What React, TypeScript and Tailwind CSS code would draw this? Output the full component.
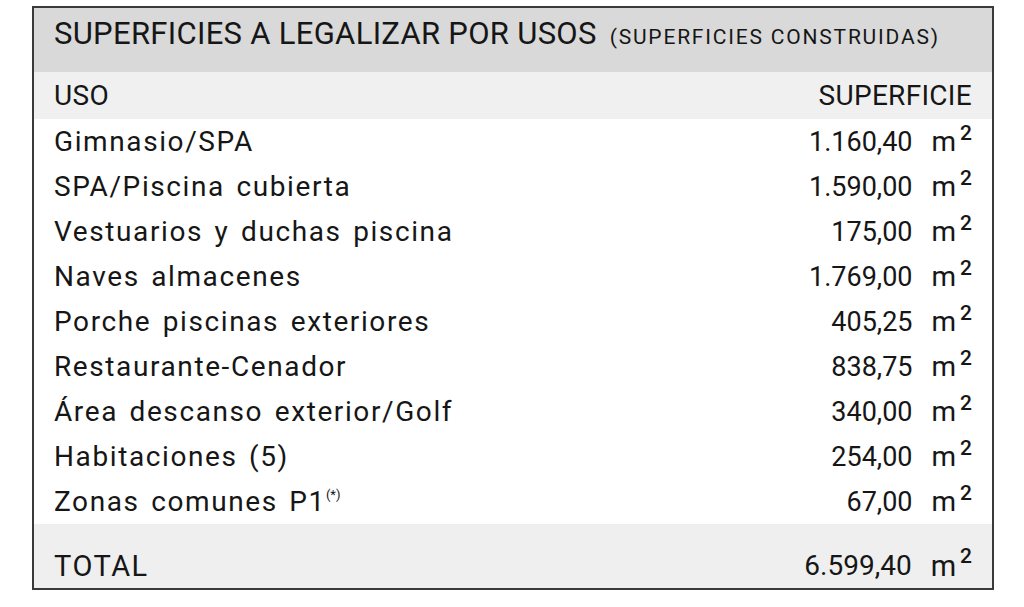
const rows: { uso: string; sup: string; note?: string }[] = [
  { uso: 'Gimnasio/SPA', sup: '1.160,40' },
  { uso: 'SPA/Piscina cubierta', sup: '1.590,00' },
  { uso: 'Vestuarios y duchas piscina', sup: '175,00' },
  { uso: 'Naves almacenes', sup: '1.769,00' },
  { uso: 'Porche piscinas exteriores', sup: '405,25' },
  { uso: 'Restaurante-Cenador', sup: '838,75' },
  { uso: 'Área descanso exterior/Golf', sup: '340,00' },
  { uso: 'Habitaciones (5)', sup: '254,00' },
  { uso: 'Zonas comunes P1', sup: '67,00', note: '(*)' },
];

function Area({ value }: { value: string }) {
  return (
    <span className="flex items-start whitespace-nowrap">
      <span className="text-[27px] tracking-[0px]">{value}</span>
      <span className="ml-[19px]">m</span>
      <span className="ml-[4px] text-[21px] font-medium leading-none -mt-[3px]">2</span>
    </span>
  );
}

export default function App() {
  return (
    <div className="w-[1024px] h-[607px] bg-white pt-[6px] pl-[32px] font-['Roboto',sans-serif] text-[#161616]">
      <div className="w-[962px] border-2 border-[#3a3a3a]">
        {/* title */}
        <div className="h-[64px] bg-[#d9d9d9] pl-[20px] pt-[8px] flex items-baseline whitespace-nowrap">
          <span className="text-[31px] tracking-[0.3px] leading-[36px]">SUPERFICIES A LEGALIZAR POR USOS</span>
          <span className="ml-[13px] text-[21px] tracking-[1.8px]">(SUPERFICIES CONSTRUIDAS)</span>
        </div>

        {/* column headers */}
        <div className="h-[47px] bg-[#f0f0f0] px-[20px] flex items-center justify-between text-[28px] tracking-[0.3px]">
          <span>USO</span>
          <span>SUPERFICIE</span>
        </div>

        {/* rows */}
        <div className="flex flex-col">
          {rows.map((r) => (
            <div
              key={r.uso}
              className="h-[45px] px-[20px] flex items-center justify-between text-[28px] leading-[32px] whitespace-nowrap"
            >
              <span className="flex items-start tracking-[1.6px] [word-spacing:3px]">
                {r.uso}
                {r.note && <span className="text-[13px] tracking-normal leading-none mt-[2px]">{r.note}</span>}
              </span>
              <Area value={r.sup} />
            </div>
          ))}
        </div>

        {/* total */}
        <div className="h-[64px] bg-[#efefef] px-[20px] pt-[20px] flex items-center justify-between text-[29px] leading-[34px] whitespace-nowrap">
          <span className="tracking-[1.5px]">TOTAL</span>
          <span className="flex items-start">
            <span className="text-[28px] tracking-[0px]">6.599,40</span>
            <span className="ml-[19px]">m</span>
            <span className="ml-[4px] text-[21px] font-medium leading-none -mt-[3px]">2</span>
          </span>
        </div>
      </div>
    </div>
  );
}
